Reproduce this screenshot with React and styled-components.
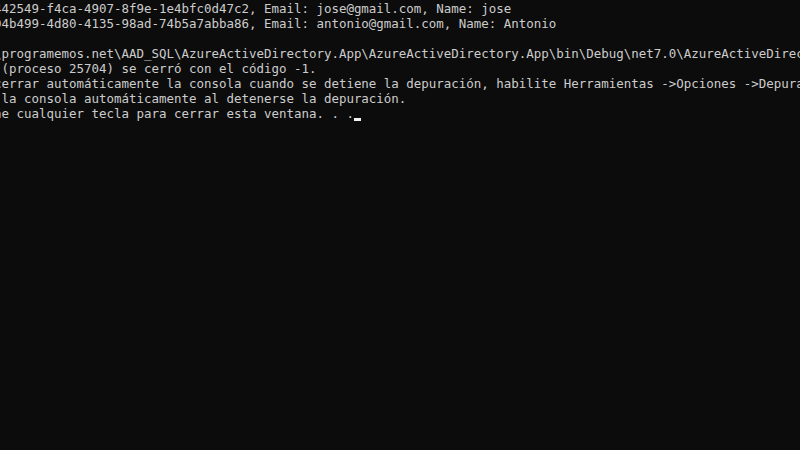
import React from "react";
import styled, { createGlobalStyle } from "styled-components";

const GlobalStyle = createGlobalStyle`
  html, body {
    margin: 0;
    padding: 0;
    background: #0c0c0c;
  }
`;

// console output, scrolled so the first columns are cut off on the left
const lines = [
  "442549-f4ca-4907-8f9e-1e4bfc0d47c2, Email: jose@gmail.com, Name: jose",
  "04b499-4d80-4135-98ad-74b5a7abba86, Email: antonio@gmail.com, Name: Antonio",
  "",
  "\\programemos.net\\AAD_SQL\\AzureActiveDirectory.App\\AzureActiveDirectory.App\\bin\\Debug\\net7.0\\AzureActiveDirectory.App.exe",
  " (proceso 25704) se cerró con el código -1.",
  "cerrar automáticamente la consola cuando se detiene la depuración, habilite Herramientas ->Opciones ->Depuración ->Cerrar",
  " la consola automáticamente al detenerse la depuración.",
];

const Console = styled.div`
  width: 800px;
  height: 450px;
  overflow: hidden;
  background: #0c0c0c;
`;

const Output = styled.pre`
  margin: 0 0 0 -6px;
  padding: 1px 0 0;
  font-family: "DejaVu Sans Mono", "Liberation Mono", monospace;
  font-size: 12.46px;
  line-height: 15px;
  color: #cccccc;
  white-space: pre;
`;

const Line = styled.div`
  height: 15px;
`;

const Cursor = styled.span`
  display: inline-block;
  width: 7.5px;
  height: 12px;
  vertical-align: top;
  border-bottom: 3px solid #f2f2f2;
`;

export default function App() {
  return (
    <>
      <GlobalStyle />
      <Console>
        <Output>
          {lines.map((text, i) => (
            <Line key={i}>{text}</Line>
          ))}
          <Line>
            ne cualquier tecla para cerrar esta ventana. . .
            <Cursor />
          </Line>
        </Output>
      </Console>
    </>
  );
}
